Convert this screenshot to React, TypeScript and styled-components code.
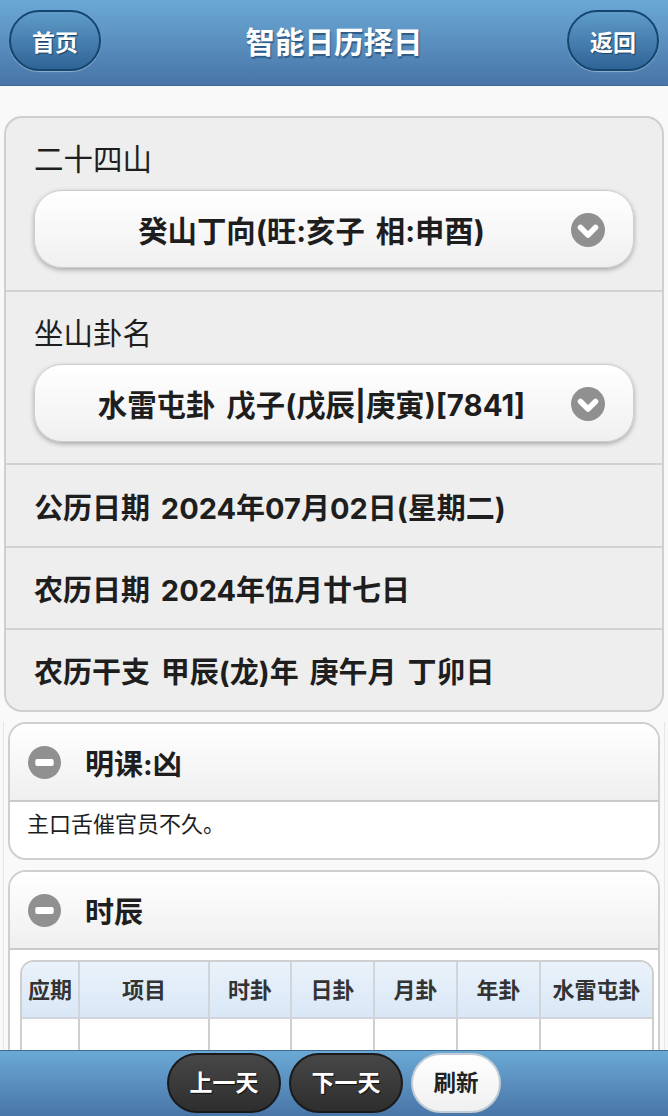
import React from "react";
import styled, { createGlobalStyle } from "styled-components";

const Global = createGlobalStyle`
  html, body { margin: 0; padding: 0; height: 1116px; overflow: hidden; background: #f9f9f9; }
  body { font-family: Inter, "Noto Sans CJK SC", "Noto Sans", sans-serif; color: #1e1e1e; }
  * { box-sizing: border-box; }
`;

const Page = styled.div`
  width: 668px;
  height: 1116px;
  overflow: hidden;
  position: relative;
`;

const Header = styled.header`
  height: 86px;
  padding: 10px 9px 0 9px;
  display: flex;
  justify-content: space-between;
  align-items: flex-start;
  background: linear-gradient(#6ba9d5, #4875a8);
  border-bottom: 1px solid #3f6a98;
`;

const Title = styled.h1`
  margin: 0;
  font-size: 29.5px;
  line-height: 64px;
  font-weight: 700;
  color: #fff;
  text-shadow: 1px 2px 1px #2f5a86;
`;

const NavButton = styled.button`
  width: 92px;
  height: 61px;
  border-radius: 31px;
  border: 2px solid #14466f;
  background: linear-gradient(#5f9cc9, #2f6496);
  box-shadow: 0 1px 1px rgba(255, 255, 255, 0.4);
  color: #fff;
  font: 700 23px/1 Inter, "Noto Sans CJK SC", sans-serif;
  text-shadow: 1px 1px 1px #1c3f60;
  padding: 5px 0 0;
`;

const Content = styled.main`
  padding: 30px 4px 0;
`;

const Panel = styled.section`
  background: #eeeeee;
  border: 2px solid #cfcfcf;
  border-radius: 18px;
  overflow: hidden;
`;

const FieldRow = styled.div`
  padding: 22px 28px 0;
  height: 173px;
  border-bottom: 2px solid #d2d2d2;
  &:first-child { height: 174px; }
`;

const FieldLabel = styled.div`
  font-size: 29.5px;
  line-height: 38px;
  height: 50px;
`;

const Select = styled.div`
  height: 78px;
  border-radius: 28px;
  border: 1px solid #cdcdcd;
  background: linear-gradient(#ffffff, #f0f0f0);
  box-shadow: 0 2px 5px rgba(0, 0, 0, 0.3);
  position: relative;
  display: flex;
  align-items: center;
  justify-content: center;
  padding-right: 45px;
  font-size: 29.4px;
  font-weight: 700;
  word-spacing: 4px;
  white-space: nowrap;
`;

const ArrowIcon = styled.svg`
  position: absolute;
  right: 28px;
  top: 22px;
  width: 34px;
  height: 34px;
`;

const InfoRow = styled.div`
  height: 83px;
  padding: 0 28px;
  display: flex;
  align-items: center;
  font-size: 29px;
  font-weight: 700;
  word-spacing: 4px;
  white-space: nowrap;
  border-bottom: 2px solid #d2d2d2;
  &:nth-last-child(2) { height: 82px; }
  &:last-child { height: 80px; border-bottom: 0; }
`;

const CollapseGroup = styled.div`
  margin: 0 -1px;
  padding: 0 4px;
  border-left: 1px solid #e6e6e6;
  border-right: 1px solid #e6e6e6;
  height: 400px;
`;

const Collapsible = styled.section`
  margin-top: 10px;
  border: 2px solid #cfcfcf;
  border-radius: 18px;
  background: #fff;
  overflow: hidden;
`;

const CollapseHead = styled.div`
  height: 78px;
  padding: 0 0 0 18px;
  display: flex;
  align-items: center;
  gap: 24px;
  background: linear-gradient(#ffffff, #efefef);
  border-bottom: 2px solid #c9c9c9;
  font-size: 29px;
  font-weight: 700;
`;

const CollapseBody = styled.div`
  height: 56px;
  padding: 7px 17px 0;
  font-size: 22px;
  line-height: 31px;
`;

const TableWrap = styled.div`
  padding: 10px 4px 0 10px;
`;

const Table = styled.div`
  display: grid;
  grid-template-columns: 58px 130px 82px 83px 83px 83px 1fr;
  border: 2px solid #cfcfcf;
  border-bottom: 0;
  border-radius: 14px 14px 0 0;
  overflow: hidden;
`;

const Th = styled.div`
  height: 57px;
  padding-bottom: 4px;
  display: flex;
  align-items: center;
  justify-content: center;
  font-size: 22px;
  font-weight: 700;
  color: #333;
  white-space: nowrap;
  background: linear-gradient(#eaf2fb, #d9e7f6);
  border-right: 2px solid #cfd5da;
  border-bottom: 2px solid #cfd5da;
  &:nth-child(7) { border-right: 0; }
`;

const Td = styled.div`
  height: 60px;
  background: #fff;
  border-right: 2px solid #cfcfcf;
  &:last-child { border-right: 0; }
`;

const Footer = styled.footer`
  position: absolute;
  left: 0;
  right: 0;
  bottom: 0;
  height: 66px;
  padding-top: 2px;
  display: flex;
  justify-content: center;
  gap: 8px;
  background: linear-gradient(#6ba9d5, #4875a8);
  border-top: 1px solid #3f6a98;
`;

const DarkButton = styled.button`
  width: 114px;
  height: 60px;
  border-radius: 30px;
  border: 2px solid #1a1a1a;
  background: linear-gradient(#474747, #2e2e2e);
  color: #fff;
  font: 700 23px/1 Inter, "Noto Sans CJK SC", sans-serif;
  text-shadow: 1px 1px 1px #111;
  padding: 0;
`;

const LightButton = styled.button`
  width: 90px;
  height: 60px;
  border-radius: 30px;
  border: 2px solid #c2ccd4;
  background: linear-gradient(#ffffff, #f0f0f0);
  color: #222;
  font: 700 22.5px/1 Inter, "Noto Sans CJK SC", sans-serif;
  padding: 0;
`;

const Arrow = () => (
  <ArrowIcon viewBox="0 0 34 34">
    <circle cx="17" cy="17" r="17" fill="#909090" />
    <path d="M9.5 14.5 L17 22 L24.5 14.5" fill="none" stroke="#fff" strokeWidth="5.5" strokeLinecap="round" strokeLinejoin="round" />
  </ArrowIcon>
);

const Minus = () => (
  <svg width="33" height="33" viewBox="0 0 34 34">
    <circle cx="17" cy="17" r="17" fill="#909090" />
    <rect x="7.5" y="13.5" width="19" height="7" rx="2" fill="#fff" />
  </svg>
);

const headers = ["应期", "项目", "时卦", "日卦", "月卦", "年卦", "水雷屯卦"];

export default function App() {
  return (
    <Page>
      <Global />
      <Header>
        <NavButton>首页</NavButton>
        <Title>智能日历择日</Title>
        <NavButton>返回</NavButton>
      </Header>
      <Content>
        <Panel>
          <FieldRow>
            <FieldLabel>二十四山</FieldLabel>
            <Select>
              癸山丁向(旺:亥子 相:申酉)
              <Arrow />
            </Select>
          </FieldRow>
          <FieldRow>
            <FieldLabel>坐山卦名</FieldLabel>
            <Select>
              水雷屯卦 戊子(戊辰|庚寅)[7841]
              <Arrow />
            </Select>
          </FieldRow>
          <InfoRow>公历日期 2024年07月02日(星期二)</InfoRow>
          <InfoRow>农历日期 2024年伍月廿七日</InfoRow>
          <InfoRow>农历干支 甲辰(龙)年 庚午月 丁卯日</InfoRow>
        </Panel>
        <CollapseGroup>
          <Collapsible>
            <CollapseHead>
              <Minus />
              明课:凶
            </CollapseHead>
            <CollapseBody>主口舌催官员不久。</CollapseBody>
          </Collapsible>
          <Collapsible>
            <CollapseHead>
              <Minus />
              时辰
            </CollapseHead>
            <TableWrap>
              <Table>
                {headers.map((h) => (
                  <Th key={h}>{h}</Th>
                ))}
                {headers.map((h) => (
                  <Td key={h} />
                ))}
              </Table>
            </TableWrap>
          </Collapsible>
        </CollapseGroup>
      </Content>
      <Footer>
        <DarkButton>上一天</DarkButton>
        <DarkButton>下一天</DarkButton>
        <LightButton>刷新</LightButton>
      </Footer>
    </Page>
  );
}
